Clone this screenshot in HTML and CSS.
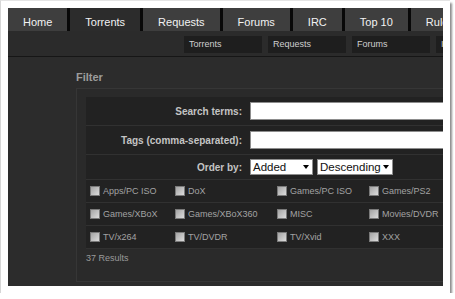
FILE: index.html
```html
<!DOCTYPE html>
<html>
<head>
<meta charset="utf-8">
<link rel="stylesheet" href="styles.css">
</head>
<body>
<div class="frame">
  <div class="app">
    <nav class="tabs">
      <a class="tab">Home</a>
      <a class="tab active">Torrents</a>
      <a class="tab">Requests</a>
      <a class="tab">Forums</a>
      <a class="tab">IRC</a>
      <a class="tab">Top 10</a>
      <a class="tab">Rules</a>
    </nav>
    <div class="subnav">
      <span class="sub">Torrents</span>
      <span class="sub">Requests</span>
      <span class="sub">Forums</span>
      <span class="sub">IRC</span>
    </div>
    <main class="main">
      <h2 class="filter-title">Filter</h2>
      <div class="box">
        <div class="form">
          <div class="field">
            <div class="lbl">Search terms:</div>
            <div class="ctl"><span class="input"></span></div>
          </div>
          <div class="field">
            <div class="lbl">Tags (comma-separated):</div>
            <div class="ctl"><span class="input"></span></div>
          </div>
          <div class="field order">
            <div class="lbl">Order by:</div>
            <div class="ctl">
              <span class="select sel-added"><span class="sel-text">Added</span><span class="arrow"></span></span>
              <span class="select sel-desc"><span class="sel-text">Descending</span><span class="arrow"></span></span>
            </div>
          </div>
          <div class="cats">
            <label class="cat"><span class="cb"></span>Apps/PC ISO</label>
            <label class="cat"><span class="cb"></span>DoX</label>
            <label class="cat"><span class="cb"></span>Games/PC ISO</label>
            <label class="cat"><span class="cb"></span>Games/PS2</label>
            <label class="cat"><span class="cb"></span>Games/XBoX</label>
            <label class="cat"><span class="cb"></span>Games/XBoX360</label>
            <label class="cat"><span class="cb"></span>MISC</label>
            <label class="cat"><span class="cb"></span>Movies/DVDR</label>
            <label class="cat"><span class="cb"></span>TV/x264</label>
            <label class="cat"><span class="cb"></span>TV/DVDR</label>
            <label class="cat"><span class="cb"></span>TV/Xvid</label>
            <label class="cat"><span class="cb"></span>XXX</label>
          </div>
        </div>
        <div class="results">37 Results</div>
      </div>
    </main>
  </div>
</div>
</body>
</html>
```
FILE: styles.css
```css
html, body {
  margin: 0;
  padding: 0;
  background: #ffffff;
}

.frame {
  width: 450px;
  height: 293px;
  box-sizing: border-box;
  padding: 7px 0 0 7px;
  background: #ffffff;
  border-left: 1px solid #d6d6d6;
  border-top: 1px solid #e4e4e4;
  box-shadow: 2px 3px 2px rgba(0, 0, 0, 0.45);
}

.app {
  width: 435px;
  height: 278px;
  background: #2c2c2c;
  overflow: hidden;
  font-family: "Liberation Sans", Arial, sans-serif;
}

.tabs {
  display: flex;
  gap: 3px;
  height: 23px;
  background: #080808;
}

.tab {
  flex: none;
  padding: 5px 15px 0;
  line-height: 18px;
  background: #3e3e3e;
  color: #f2f2f2;
  font-size: 11px;
  white-space: nowrap;
}

.tab.active {
  background: #2c2c2c;
}

.subnav {
  display: flex;
  gap: 6px;
  height: 26px;
  box-sizing: border-box;
  padding: 5px 0 0 176px;
  border-bottom: 1px solid #161616;
  background: #2b2b2b;
}

.sub {
  flex: none;
  width: 78px;
  height: 17px;
  box-sizing: border-box;
  padding-left: 5px;
  line-height: 17px;
  background: #1e1e1e;
  color: #cfcfcf;
  font-size: 9px;
}

.main {
  padding: 14px 0 0 68px;
}

.filter-title {
  margin: 0 0 4px;
  font-size: 11px;
  line-height: 13px;
  font-weight: bold;
  color: #9c9c9c;
}

.box {
  width: 420px;
  height: 194px;
  box-sizing: border-box;
  border: 1px solid #363636;
  background: #2a2a2a;
  padding: 8px 0 0 9px;
}

.form {
  width: 420px;
  background: #222222;
}

.field {
  display: flex;
  align-items: center;
  height: 28px;
  border-bottom: 1px solid #313131;
}

.field.order {
  height: 24px;
}

.lbl {
  flex: none;
  width: 160px;
  box-sizing: border-box;
  padding-right: 4px;
  text-align: right;
  font-weight: bold;
  font-size: 10px;
  color: #c4c4c4;
  white-space: nowrap;
}

.ctl {
  flex: none;
  display: flex;
  gap: 4px;
  padding-left: 4px;
}

.input {
  display: block;
  width: 260px;
  height: 18px;
  box-sizing: border-box;
  background: #ffffff;
  border: 1px solid #8d8d8d;
}

.select {
  display: flex;
  align-items: center;
  height: 16px;
  box-sizing: border-box;
  padding: 0 3px 0 2px;
  background: #ffffff;
  border: 1px solid #8d8d8d;
  font-size: 11.5px;
}

.sel-text {
  color: #111111;
}

.sel-added {
  width: 63px;
}

.sel-desc {
  width: 76px;
}

.arrow {
  margin-left: auto;
  width: 0;
  height: 0;
  border-left: 3px solid transparent;
  border-right: 3px solid transparent;
  border-top: 4px solid #000000;
}

.cats {
  display: grid;
  grid-template-columns: 85px 102px 92px 1fr;
}

.cat {
  display: flex;
  align-items: center;
  gap: 3px;
  height: 22px;
  padding-left: 4px;
  border-bottom: 1px solid #313131;
  color: #a2a2a2;
  font-size: 9px;
  white-space: nowrap;
}

.cb {
  flex: none;
  width: 10px;
  height: 10px;
  box-sizing: border-box;
  border: 1px solid #7a7a7a;
  background: linear-gradient(135deg, #a4a4a4, #dcdcdc);
}

.results {
  padding-top: 3px;
  line-height: 12px;
  font-size: 9px;
  color: #9a9a9a;
}
```
